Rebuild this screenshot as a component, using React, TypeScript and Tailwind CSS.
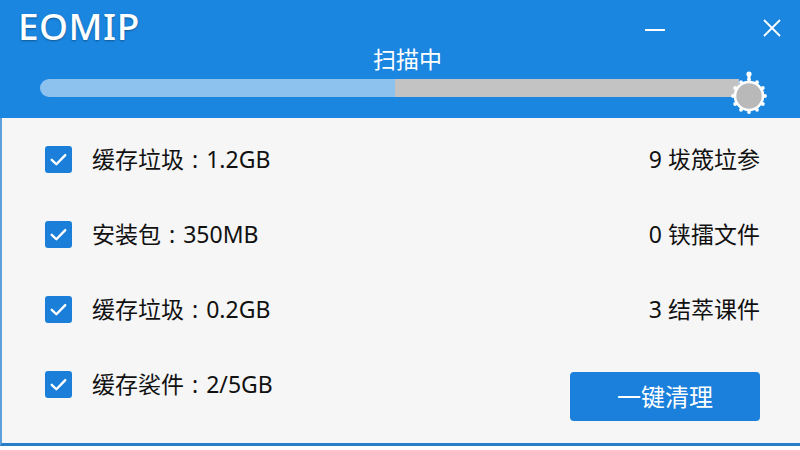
import { useState } from "react";

type Item = { id: number; name: string; size: string; right: string };

const items: Item[] = [
    { id: 1, name: "缓存垃圾", size: "1.2GB", right: "9 坺筬垃参" },
    { id: 2, name: "安装包", size: "350MB", right: "0 铗擂文件" },
    { id: 3, name: "缓存垃圾", size: "0.2GB", right: "3 结萃课件" },
    { id: 4, name: "缓存裟件", size: "2/5GB", right: "" },
];

const Knob = () => {
    const notches = Array.from({ length: 12 }, (_, i) => (i * 30 * Math.PI) / 180);
    return (
        <svg width="40" height="46" viewBox="-20 -25 40 46" className="shrink-0">
            {notches.map((a, i) => (
                <circle key={i} cx={Math.sin(a) * 16} cy={-Math.cos(a) * 16} r="1.9" fill="#ffffff" />
            ))}
            <rect x="-1.5" y="-22" width="3" height="6" fill="#ffffff" />
            <circle cx="0" cy="-22" r="2.6" fill="#ffffff" />
            <circle cx="0" cy="0" r="14" fill="#b9b9b9" stroke="#ffffff" strokeWidth="2.6" />
        </svg>
    );
};

const Checkbox = ({ checked, onClick }: { checked: boolean; onClick: () => void }) => (
    <button
        onClick={onClick}
        className={`w-[27px] h-[27px] rounded-[3px] flex items-center justify-center shrink-0 ${checked ? "bg-[#1b7fd9]" : "bg-white border-2 border-[#1b7fd9]"}`}
    >
        {checked && (
            <svg width="19" height="19" viewBox="0 0 16 16" fill="none">
                <path d="M2.3 8.3 L6.2 12 L13.7 4.3" stroke="#ffffff" strokeWidth="2" strokeLinecap="round" strokeLinejoin="round" />
            </svg>
        )}
    </button>
);

export default function App() {
    const [checked, setChecked] = useState<Record<number, boolean>>({ 1: true, 2: true, 3: true, 4: true });
    const toggle = (id: number) => setChecked((c) => ({ ...c, [id]: !c[id] }));

    return (
        <div className="w-[800px] h-[450px] bg-white flex flex-col overflow-hidden [font-family:'Noto_Sans','Noto_Sans_CJK_SC',sans-serif]">
            {/* title bar */}
            <div className="h-[118px] bg-[#1a86e0] flex flex-col px-[18px] shrink-0">
                <div className="h-[46px] flex items-start justify-between">
                    <div className="text-white text-[37px] font-medium leading-none mt-[7px] tracking-[0.5px] [text-shadow:0_1px_2px_rgba(0,0,0,0.35)]">
                        EOMIP
                    </div>
                    <div className="flex items-start">
                        <div className="w-[20px] h-[2px] bg-white mt-[29px]" />
                        <svg width="18" height="18" viewBox="0 0 18 18" className="mt-[19px] ml-[98px] mr-[1px]">
                            <path d="M1.5 1.5 L16.5 16.5 M16.5 1.5 L1.5 16.5" stroke="#ffffff" strokeWidth="1.8" strokeLinecap="round" />
                        </svg>
                    </div>
                </div>
                <div className="h-[28px] pl-[355px] text-white text-[23px] leading-[26px]">扫描中</div>
                <div className="flex items-center pl-[22px] -mt-[15px]">
                    <div className="flex-1 h-[18px] rounded-l-full flex overflow-hidden">
                        <div className="w-[355px] bg-[#8ec2ee]" />
                        <div className="flex-1 bg-[#c3c3c3]" />
                    </div>
                    <div className="-ml-[10px] mr-[13px] mt-[12px]">
                        <Knob />
                    </div>
                </div>
            </div>

            {/* item list */}
            <div className="flex-1 bg-[#f6f6f6] border-l-2 border-l-[#5d9fdc] border-b-[3px] border-b-[#2a7dc8] pt-[4px] pl-[43px] pr-[40px] text-[#111111]">
                {items.map((item) => (
                    <div key={item.id} className="h-[75px] flex items-center">
                        <Checkbox checked={!!checked[item.id]} onClick={() => toggle(item.id)} />
                        <div className="ml-[20px] text-[23px] leading-none flex items-center">
                            <span>{item.name}</span>
                            <span className="mx-[8px]">:</span>
                            <span>{item.size}</span>
                        </div>
                        <div className="ml-auto">
                            {item.right ? (
                                <div className="text-[23px] leading-none">{item.right}</div>
                            ) : (
                                <button className="w-[190px] h-[49px] mt-[24px] rounded-[4px] bg-[#1b80db] text-white text-[24px] leading-none">
                                    一键清理
                                </button>
                            )}
                        </div>
                    </div>
                ))}
            </div>
            <div className="h-[4px] bg-white shrink-0" />
        </div>
    );
}
